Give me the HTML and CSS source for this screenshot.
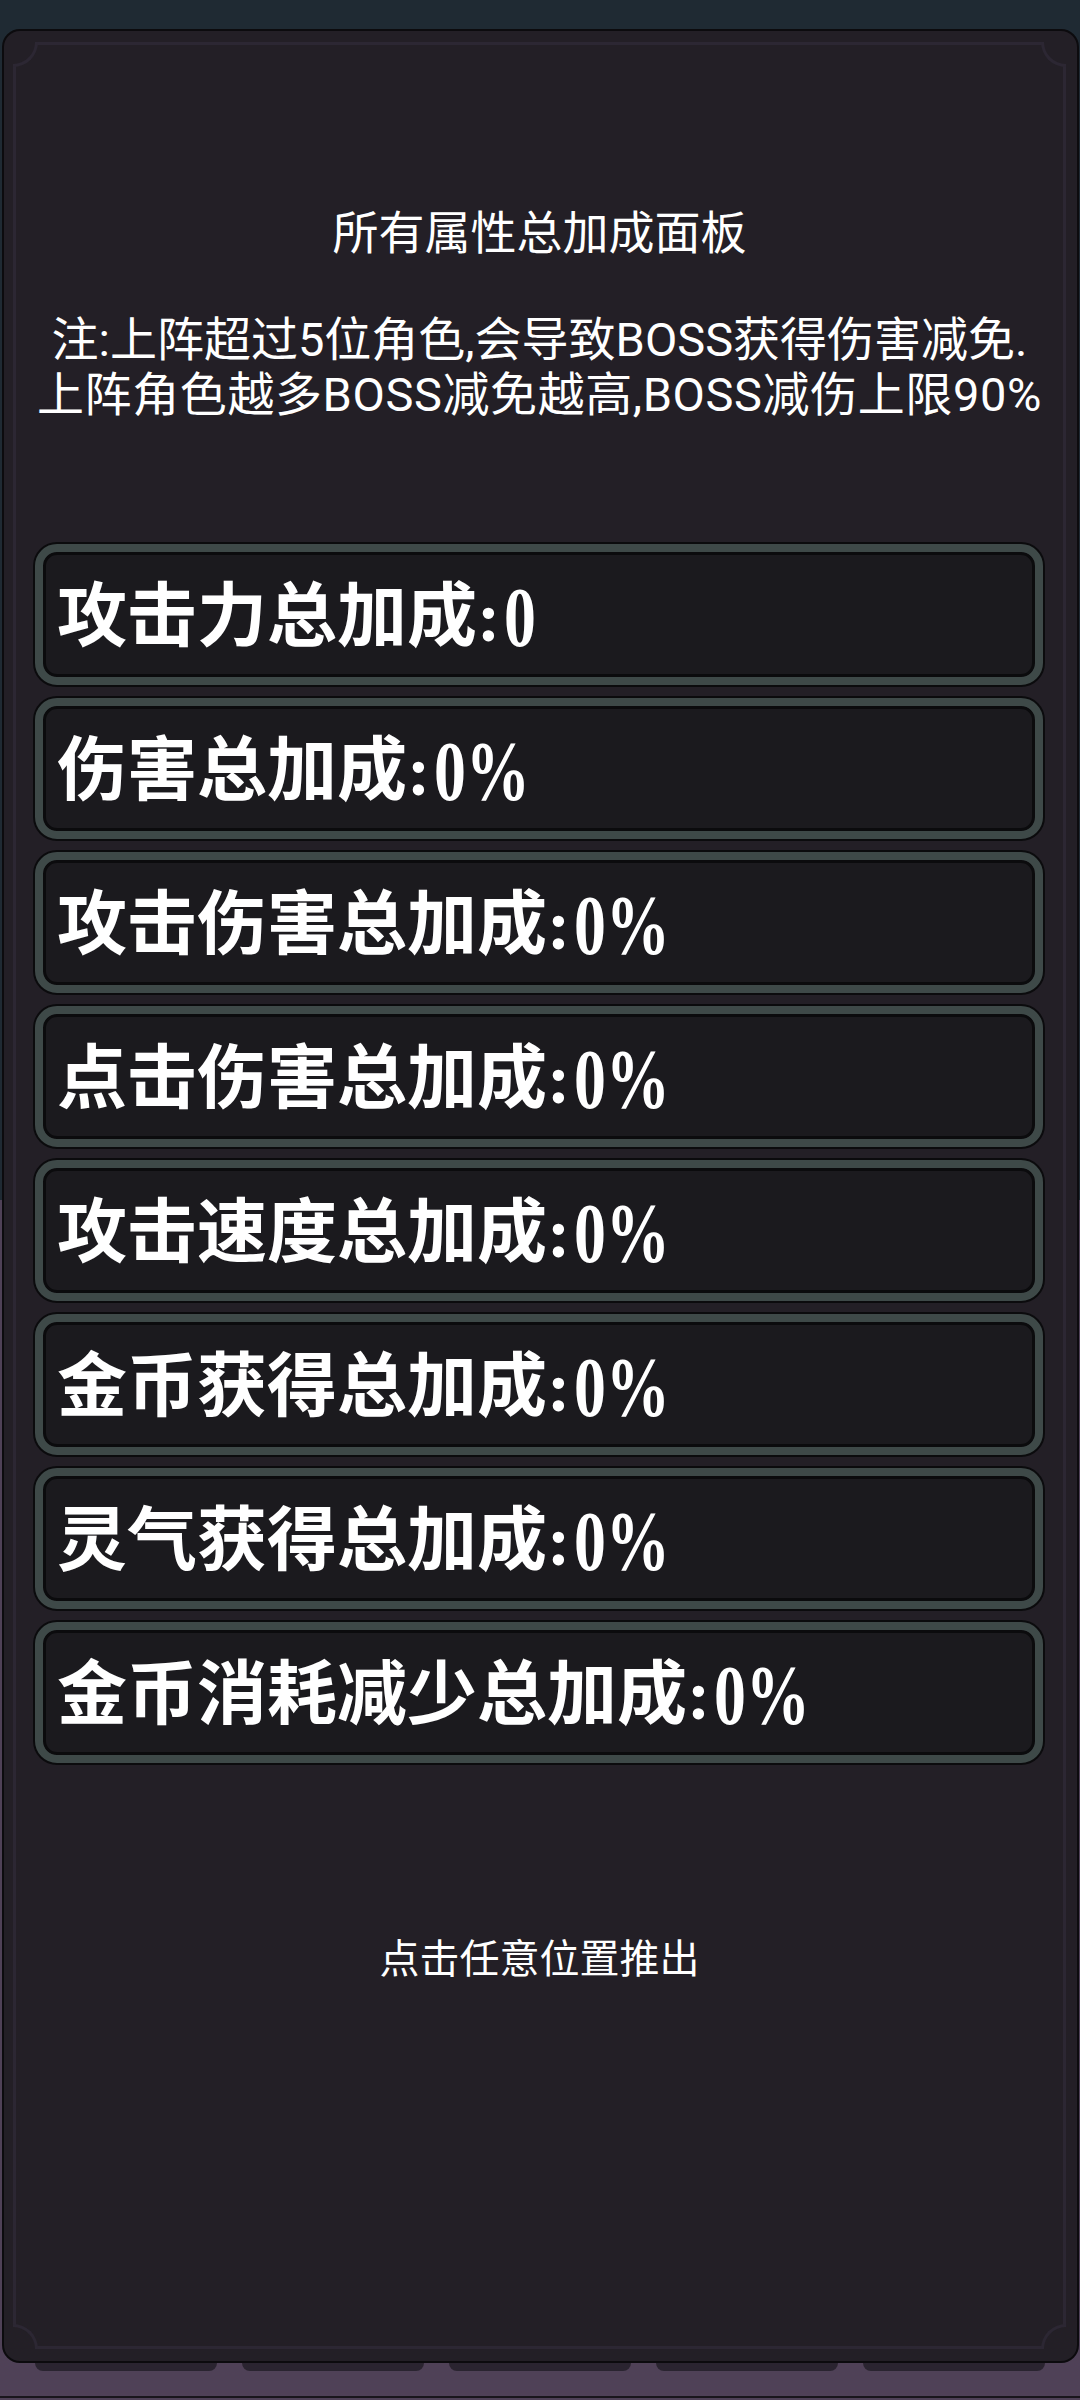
FILE: index.html
```html
<!DOCTYPE html>
<html lang="zh-CN">
<head>
    <meta charset="UTF-8">
    <meta name="viewport" content="width=device-width, initial-scale=1.0">
    <title>所有属性总加成面板</title>
    <link rel="stylesheet" href="styles.css">
</head>
<body>
<div class="topbar"></div>

<div class="panel">
    <div class="frame">
        <div class="frame-body">
            <h1 class="title">所有属性总加成面板</h1>
            <p class="note">注:上阵超过5位角色,会导致BOSS获得伤害减免.<br><span class="wide">上阵角色越多BOSS减免越高,BOSS减伤上限90%</span></p>

            <ul class="stats">
                <li class="stat">攻击力总加成:<span class="val">0</span></li>
                <li class="stat">伤害总加成:<span class="val">0%</span></li>
                <li class="stat">攻击伤害总加成:<span class="val">0%</span></li>
                <li class="stat">点击伤害总加成:<span class="val">0%</span></li>
                <li class="stat">攻击速度总加成:<span class="val">0%</span></li>
                <li class="stat">金币获得总加成:<span class="val">0%</span></li>
                <li class="stat">灵气获得总加成:<span class="val">0%</span></li>
                <li class="stat">金币消耗减少总加成:<span class="val">0%</span></li>
            </ul>

            <p class="hint">点击任意位置推出</p>
        </div>
    </div>
</div>

<div class="tabs">
    <div class="tab"></div>
    <div class="tab"></div>
    <div class="tab"></div>
    <div class="tab"></div>
    <div class="tab"></div>
</div>
</body>
</html>
```

FILE: styles.css
```css
body { margin: 0; height: 2400px; overflow: hidden; background: linear-gradient(to bottom, #1f2a33 0, #1f2a33 1200px, #4f4157 1200px); color: #fff; font-family: Roboto, "Noto Sans CJK SC", sans-serif; }

.topbar { height: 29px; }

/* main dark board */
.panel { height: 2334px; box-sizing: border-box; margin: 0 1px 0 2px; padding: 11px 11px 12px 9px; background: #231f26; border: 2px solid #0c0b0e; border-radius: 18px; display: flex; flex-direction: column; }

/* thin inner line with notched corners */
.frame { flex: 1; position: relative; border: 3px solid #2c2733; display: flex; flex-direction: column; }
.frame-body { flex: 1; position: relative; text-align: center; }
.frame::before, .frame::after, .frame-body::before, .frame-body::after { content: ""; position: absolute; width: 22px; height: 22px; background: #231f26; border: 0 solid #2c2733; }
.frame::before { top: -3px; left: -3px; border-right-width: 3px; border-bottom-width: 3px; border-bottom-right-radius: 25px; }
.frame::after { top: -3px; right: -3px; border-left-width: 3px; border-bottom-width: 3px; border-bottom-left-radius: 25px; }
.frame-body::before { bottom: -3px; left: -3px; border-right-width: 3px; border-top-width: 3px; border-top-right-radius: 25px; }
.frame-body::after { bottom: -3px; right: -3px; border-left-width: 3px; border-top-width: 3px; border-top-left-radius: 25px; }

.title { margin: 160px 0 0; font-size: 46px; line-height: 56px; font-weight: 400; }
.note { margin: 51px 0 0; font-size: 47px; line-height: 55px; }
.note .wide { letter-spacing: 0.6px; }

.stats { list-style: none; margin: 122px 0 0; padding: 0 20px 0 19px; display: flex; flex-direction: column; gap: 13px; }
.stat { height: 141px; box-sizing: border-box; border: 8px solid #3e4948; border-radius: 22px; background: #1b1a1e; box-shadow: 0 0 0 2px #0b0b0d, inset 0 0 0 3px #0b0b0d; display: flex; align-items: center; padding: 6px 0 0 14px; text-align: left; font-family: "Liberation Serif", "Noto Sans CJK SC", serif; font-weight: 700; font-size: 70px; line-height: 70px; }
/* tall narrow digits */
.val { display: inline-block; font-size: 84px; line-height: 70px; font-weight: 700; transform: scaleX(0.76); transform-origin: left center; margin-left: 4px; }

.hint { margin: 172px 0 0; font-size: 40px; line-height: 50px; }

/* tab strip peeking under the board */
.tabs { height: 35px; box-sizing: border-box; display: flex; gap: 25px; padding: 0 35px; border-bottom: 2px solid #19161c; }
.tab { width: 182px; height: 8px; background: #2a2430; border-radius: 0 0 8px 8px; }
```
